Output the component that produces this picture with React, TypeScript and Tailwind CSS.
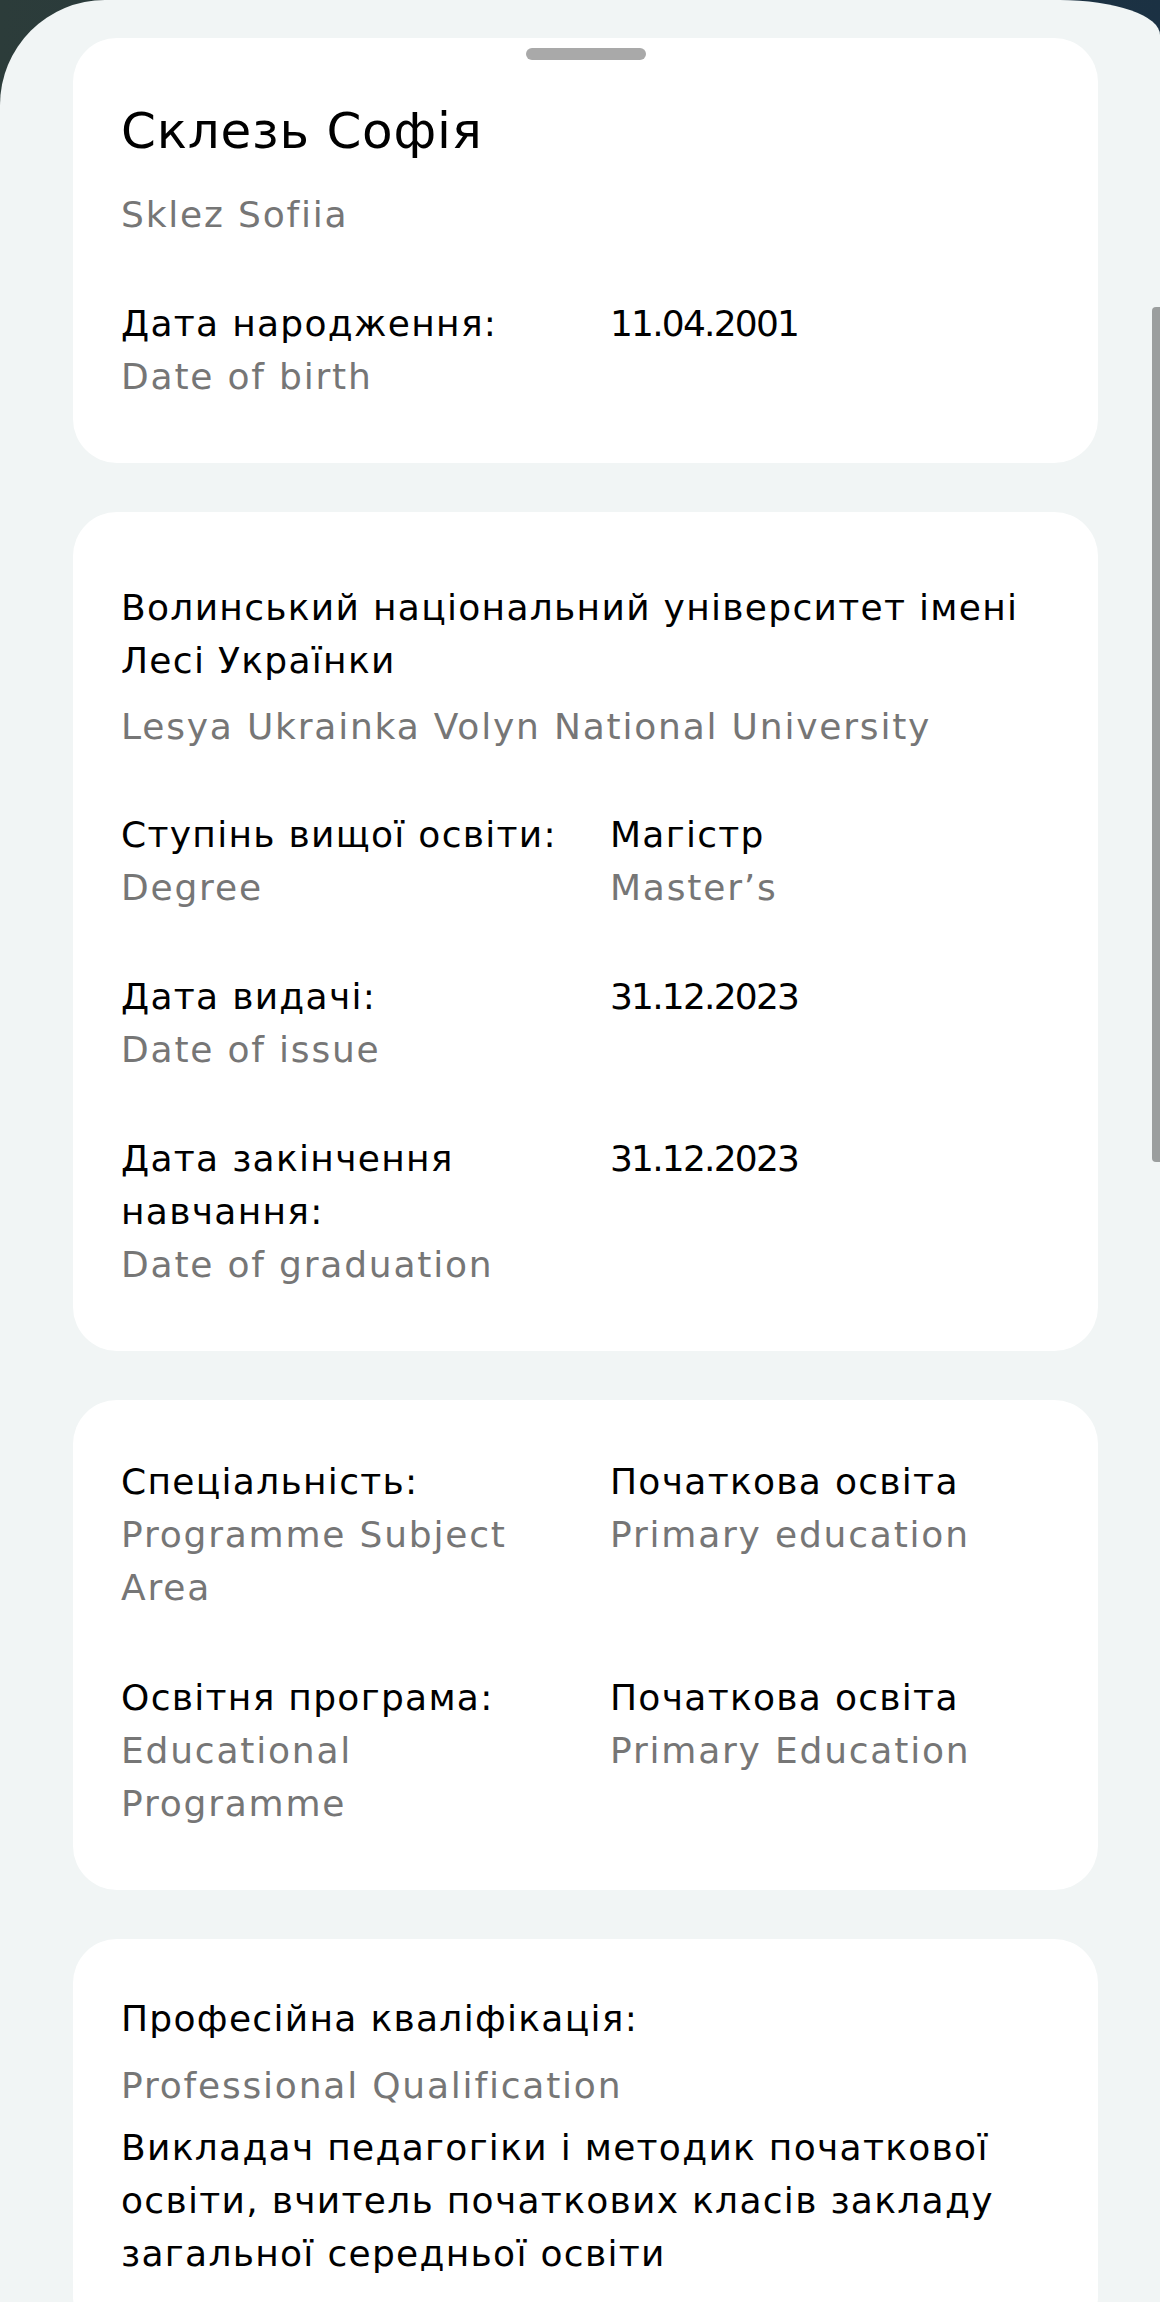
import React from "react";

const main = "text-[36px] leading-[53px] tracking-[1.3px] text-black";
const sub = "text-[36px] leading-[53px] tracking-[1.8px] text-[#767676]";
const num = "text-[36px] leading-[53px] tracking-[-1.8px] text-black";

type RowProps = {
  label: React.ReactNode;
  labelEn: React.ReactNode;
  value: string;
  valueEn?: string;
  date?: boolean;
};

const Row: React.FC<RowProps> = ({ label, labelEn, value, valueEn, date }) => (
  <div className="grid grid-cols-[489px_1fr]">
    <div>
      <p className={main}>{label}</p>
      <p className={sub}>{labelEn}</p>
    </div>
    <div>
      <p className={date ? num : main}>{value}</p>
      {valueEn && <p className={sub}>{valueEn}</p>}
    </div>
  </div>
);

const Card: React.FC<{ className?: string; children: React.ReactNode }> = ({ className = "", children }) => (
  <section className={`w-[1025px] rounded-[44px] bg-white px-[48px] ${className}`}>{children}</section>
);

export default function App() {
  return (
    <div className="relative h-[2302px] w-[1160px] overflow-hidden bg-linear-to-r from-[#2c3c3a] to-[#1b3143] font-['DejaVu_Sans',sans-serif]">
      <div className="h-full rounded-tl-[105px] rounded-tr-[100px_35px] bg-[#f1f5f5]">
        <div className="flex flex-col gap-[49px] pl-[73px] pt-[38px]">
          {/* name */}
          <Card className="pt-[10px] pb-[60px]">
            <div className="mx-auto h-[12px] w-[120px] rounded-full bg-[#a9a9a9]" />
            <h1 className="mt-[42px] text-[50px] leading-[58px] tracking-[0.8px] text-black">Склезь Софія</h1>
            <p className={`mt-[28px] ${sub}`}>Sklez Sofiia</p>
            <div className="mt-[56px]">
              <Row label="Дата народження:" labelEn="Date of birth" value="11.04.2001" date />
            </div>
          </Card>

          {/* university */}
          <Card className="pt-[69px] pb-[60px]">
            <p className={`whitespace-nowrap ${main}`}>
              Волинський національний університет імені
              <br />
              Лесі Українки
            </p>
            <p className={`mt-[13px] whitespace-nowrap ${sub}`}>Lesya Ukrainka Volyn National University</p>
            <div className="mt-[55px] flex flex-col gap-[56px]">
              <Row label="Ступінь вищої освіти:" labelEn="Degree" value="Магістр" valueEn="Master’s" />
              <Row label="Дата видачі:" labelEn="Date of issue" value="31.12.2023" date />
              <Row
                label={
                  <>
                    Дата закінчення
                    <br />
                    навчання:
                  </>
                }
                labelEn="Date of graduation"
                value="31.12.2023"
                date
              />
            </div>
          </Card>

          {/* programme */}
          <Card className="pt-[55px] pb-[60px]">
            <div className="flex flex-col gap-[57px]">
              <Row
                label="Спеціальність:"
                labelEn={
                  <>
                    Programme Subject
                    <br />
                    Area
                  </>
                }
                value="Початкова освіта"
                valueEn="Primary education"
              />
              <Row
                label="Освітня програма:"
                labelEn={
                  <>
                    Educational
                    <br />
                    Programme
                  </>
                }
                value="Початкова освіта"
                valueEn="Primary Education"
              />
            </div>
          </Card>

          {/* qualification */}
          <Card className="pt-[53px] pb-[60px]">
            <p className={main}>Професійна кваліфікація:</p>
            <p className={`mt-[14px] ${sub}`}>Professional Qualification</p>
            <p className={`mt-[9px] whitespace-nowrap ${main}`}>
              Викладач педагогіки і методик початкової
              <br />
              освіти, вчитель початкових класів закладу
              <br />
              загальної середньої освіти
            </p>
          </Card>
        </div>
      </div>

      {/* scroll indicator */}
      <div className="absolute right-0 top-[307px] h-[855px] w-[8px] rounded-tl-[4px] rounded-bl-[4px] bg-[#9b9e9e]" />
    </div>
  );
}
